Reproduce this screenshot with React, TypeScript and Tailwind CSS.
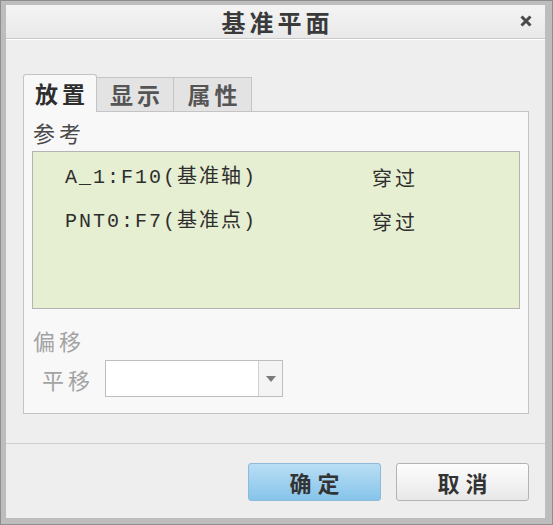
import React from "react";

const cjk = { fontFamily: '"Noto Sans CJK SC", "Noto Sans", sans-serif' };
const mono = { fontFamily: '"Liberation Mono", "Noto Sans CJK SC", monospace' };

export default function App() {
  return (
    <div className="w-[553px] h-[525px] bg-[#8e8e8e] p-[1px]" style={cjk}>
      <div className="w-full h-full border-l-[5px] border-r-[7px] border-t-[4px] border-b-[6px] border-[#bdbdbd] flex flex-col bg-[#eeeeef]">
        {/* Title bar */}
        <div className="h-[34px] shrink-0 relative flex items-center justify-center bg-gradient-to-b from-[#f4f4f4] to-[#e9e9ea] border-b border-[#c9c9c9]">
          <span className="text-[24px] font-bold tracking-[4px] text-[#3a3a3a] leading-none pl-[4px]">基准平面</span>
          <svg className="absolute right-[13px] top-[10px]" width="12" height="12" viewBox="0 0 12 12">
            <path d="M1.5 1.5 L10.5 10.5 M10.5 1.5 L1.5 10.5" stroke="#4a4a4a" strokeWidth="3" strokeLinecap="butt" />
          </svg>
        </div>
        <div className="h-[1px] bg-white shrink-0" />

        {/* Body */}
        <div className="flex-1 flex flex-col pl-[17px] pr-[16px]">
          {/* Tabs */}
          <div className="mt-[34px] flex items-end h-[38px]">
            <div className="h-[38px] w-[74px] bg-[#f8f8f9] border-l border-t border-r border-[#c4c4c4] rounded-t-[3px] flex items-center justify-center">
              <span className="text-[23px] font-bold tracking-[4px] text-[#2e2e2e] leading-none pl-[4px]">放置</span>
            </div>
            <div className="h-[35px] w-[77px] bg-[#e3e3e4] border-t border-r border-b border-[#c4c4c4] flex items-center justify-center">
              <span className="text-[23px] font-bold tracking-[4px] text-[#555] leading-none pl-[4px]">显示</span>
            </div>
            <div className="h-[35px] w-[78px] bg-[#e3e3e4] border-t border-r border-b border-[#c4c4c4] flex items-center justify-center">
              <span className="text-[23px] font-bold tracking-[4px] text-[#555] leading-none pl-[4px]">属性</span>
            </div>
            <div className="flex-1 border-b border-[#c4c4c4]" />
          </div>

          {/* Panel */}
          <div className="h-[302px] bg-[#f8f8f9] border-l border-r border-b border-[#c4c4c4] flex flex-col">
            <div className="h-[39px] flex items-center pl-[9px]">
              <span className="text-[22px] tracking-[4px] text-[#4a4a4a] leading-none">参考</span>
            </div>
            <div className="ml-[8px] w-[488px] h-[158px] bg-[#e6efd1] border border-[#b4b4b4] pt-[4px]">
              {[
                ["A_1:F10(基准轴)", "穿过"],
                ["PNT0:F7(基准点)", "穿过"],
              ].map(([a, b]) => (
                <div key={a} className="h-[44px] flex items-center pl-[32px] text-[20px] text-[#2e2e2e] leading-none">
                  <span className="w-[307px] tracking-[2px]" style={mono}>{a}</span>
                  <span className="tracking-[3px]" style={cjk}>{b}</span>
                </div>
              ))}
            </div>
            <div className="mt-[11px] h-[40px] flex items-center pl-[9px]">
              <span className="text-[22px] tracking-[4px] text-[#a3a3a3] leading-none">偏移</span>
            </div>
            <div className="h-[37px] flex items-center pl-[18px]">
              <span className="w-[63px] text-[22px] tracking-[4px] text-[#a3a3a3] leading-none">平移</span>
              <div className="w-[178px] h-[37px] bg-white border border-[#bdbdbd] flex">
                <div className="flex-1" />
                <div className="w-[24px] border-l border-[#d0d0d0] bg-[#f4f4f4] flex items-center justify-center">
                  <svg width="10" height="6" viewBox="0 0 10 6">
                    <path d="M0 0 L10 0 L5 6 Z" fill="#7a7a7a" />
                  </svg>
                </div>
              </div>
            </div>
          </div>
          <div className="flex-1" />
        </div>

        {/* Footer */}
        <div className="h-[75px] shrink-0 border-t border-[#cfcfcf] flex justify-end items-start pt-[19px] pr-[16px] gap-[15px]">
          <button className="w-[133px] h-[38px] rounded-[3px] border border-[#8dbad8] bg-gradient-to-b from-[#b9def4] to-[#86c4ea] flex items-center justify-center">
            <span className="text-[22px] font-bold tracking-[6px] text-[#333] leading-none pl-[6px]">确定</span>
          </button>
          <button className="w-[133px] h-[38px] rounded-[3px] border border-[#b3b3b3] bg-gradient-to-b from-[#fdfdfd] to-[#e8e8e9] flex items-center justify-center">
            <span className="text-[22px] font-bold tracking-[6px] text-[#333] leading-none pl-[6px]">取消</span>
          </button>
        </div>
      </div>
    </div>
  );
}
